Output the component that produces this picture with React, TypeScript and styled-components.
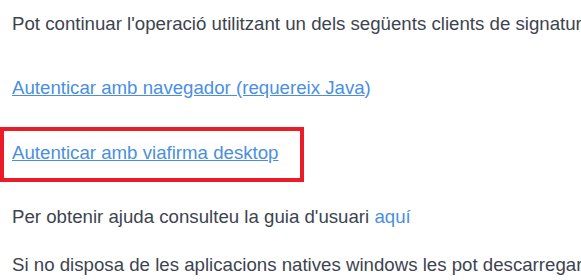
import React from "react";
import styled, { createGlobalStyle } from "styled-components";

const GlobalStyle = createGlobalStyle`
  html, body {
    margin: 0;
    padding: 0;
    background: #ffffff;
    overflow: hidden;
  }
  body {
    font-family: "Liberation Sans", Arial, sans-serif;
  }
`;

const Page = styled.div`
  width: 581px;
  height: 280px;
  padding: 11px 0 0 12px;
  box-sizing: border-box;
  font-size: 18.67px;
  line-height: 26.67px;
  color: #3d4450;
  white-space: nowrap;
  overflow: hidden;
`;

const Text = styled.p<{ $gap: number }>`
  margin: 0 0 ${(p) => p.$gap}px 0;
`;

const Link = styled.a<{ $plain?: boolean }>`
  color: #4a8fdf;
  text-decoration: ${(p) => (p.$plain ? "none" : "underline")};
  cursor: pointer;
`;

const LinkTail = styled.span`
  color: #4a8fdf;
`;

const Highlight = styled.div`
  display: inline-block;
  margin: 0 0 22px -12px;
  padding: 9px 21px 11px 8px;
  border: 4px solid #ea1c28;
`;

export default function App() {
  return (
    <>
      <GlobalStyle />
      <Page>
        <Text $gap={37}>
          Pot continuar l'operació utilitzant un dels següents clients de signatura
        </Text>
        <Text $gap={26}>
          <Link>Autenticar amb navegador (requereix Java</Link>
          <LinkTail>)</LinkTail>
        </Text>
        <Highlight>
          <Link>Autenticar amb viafirma desktop</Link>
        </Highlight>
        <Text $gap={21}>
          Per obtenir ajuda consulteu la guia d'usuari <Link $plain>aquí</Link>
        </Text>
        <Text $gap={0}>
          Si no disposa de les aplicacions natives windows les pot descarregar aquí
        </Text>
      </Page>
    </>
  );
}
